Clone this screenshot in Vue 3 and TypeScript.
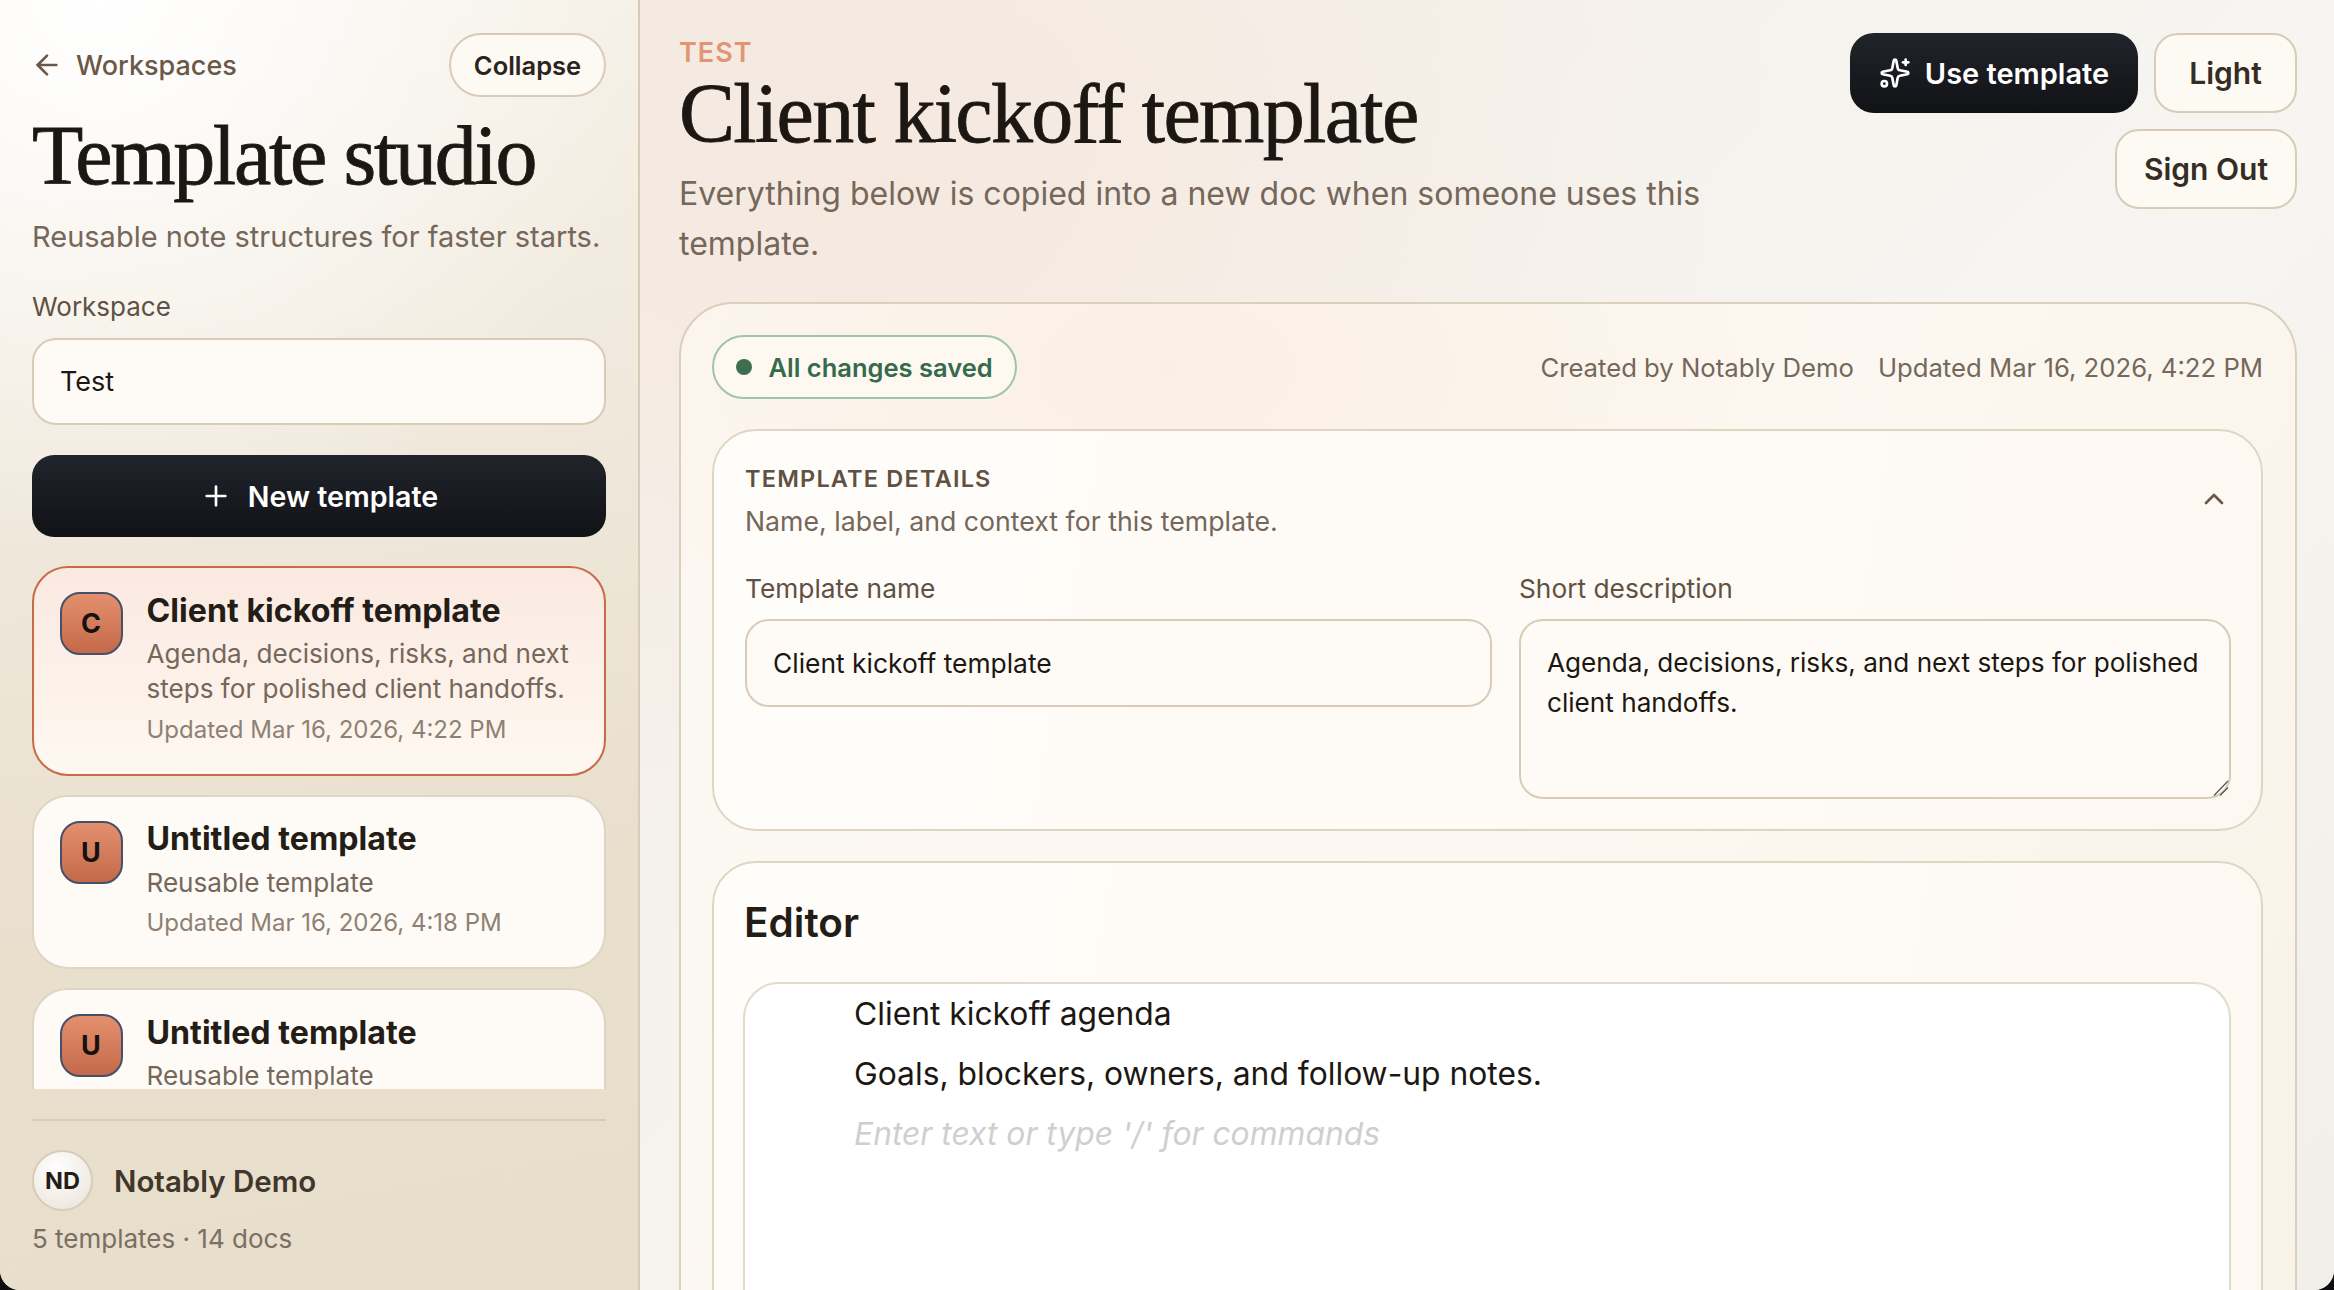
<template>
  <div class="app-shell">
    <aside class="sidebar">
      <div class="side-top">
        <a class="back-link">
          <svg class="back-icon" viewBox="0 0 24 24" fill="none" stroke="currentColor" stroke-width="2" stroke-linecap="round" stroke-linejoin="round">
            <path d="M19 12H5" /><path d="m12 19-7-7 7-7" />
          </svg>
          Workspaces
        </a>
        <button class="collapse-btn">Collapse</button>
      </div>
      <h1 class="side-title">Template studio</h1>
      <p class="side-sub">Reusable note structures for faster starts.</p>
      <label class="field-label side-label">Workspace</label>
      <div class="workspace-select">Test</div>
      <button class="new-btn">
        <svg class="plus-icon" viewBox="0 0 24 24" fill="none" stroke="currentColor" stroke-width="2" stroke-linecap="round">
          <path d="M5 12h14" /><path d="M12 5v14" />
        </svg>
        New template
      </button>
      <div class="template-list">
        <div v-for="t in templates" :key="t.id" class="template-card" :class="{ active: t.active }">
          <span class="tile">{{ t.title[0] }}</span>
          <div class="card-body">
            <div class="card-title">{{ t.title }}</div>
            <div class="card-desc">{{ t.desc }}</div>
            <div class="card-time">{{ t.updated }}</div>
          </div>
        </div>
      </div>
      <div class="side-foot">
        <div class="user-row">
          <span class="avatar">ND</span>
          <span class="user-name">Notably Demo</span>
        </div>
        <div class="counts">5 templates · 14 docs</div>
      </div>
    </aside>

    <main class="main">
      <header class="main-head">
        <div class="head-text">
          <div class="eyebrow">TEST</div>
          <h2 class="main-title">Client kickoff template</h2>
          <p class="main-sub">Everything below is copied into a new doc when someone uses this template.</p>
        </div>
        <div class="head-actions">
          <button class="use-btn">
            <svg class="spark-icon" viewBox="0 0 24 24" fill="none" stroke="currentColor" stroke-width="2" stroke-linecap="round" stroke-linejoin="round">
              <path d="M11.017 2.814a1 1 0 0 1 1.966 0l1.051 5.558a2 2 0 0 0 1.594 1.594l5.558 1.051a1 1 0 0 1 0 1.966l-5.558 1.051a2 2 0 0 0-1.594 1.594l-1.051 5.558a1 1 0 0 1-1.966 0l-1.051-5.558a2 2 0 0 0-1.594-1.594l-5.558-1.051a1 1 0 0 1 0-1.966l5.558-1.051a2 2 0 0 0 1.594-1.594z" />
              <path d="M20 2v4" /><path d="M22 4h-4" /><circle cx="4" cy="20" r="2" />
            </svg>
            Use template
          </button>
          <button class="ghost-btn light-btn">Light</button>
          <button class="ghost-btn signout-btn">Sign Out</button>
        </div>
      </header>

      <section class="panel">
        <div class="panel-top">
          <span class="saved-pill"><i class="dot"></i>All changes saved</span>
          <div class="meta">
            <span>Created by Notably Demo</span>
            <span>Updated Mar 16, 2026, 4:22 PM</span>
          </div>
        </div>

        <div class="details-card">
          <div class="details-head">
            <div>
              <div class="details-title">TEMPLATE DETAILS</div>
              <div class="details-sub">Name, label, and context for this template.</div>
            </div>
            <svg class="chevron" viewBox="0 0 24 24" fill="none" stroke="currentColor" stroke-width="2" stroke-linecap="round" stroke-linejoin="round">
              <path d="m18 15-6-6-6 6" />
            </svg>
          </div>
          <div class="details-grid">
            <div>
              <label class="field-label wide-label">Template name</label>
              <div class="text-input">Client kickoff template</div>
            </div>
            <div class="area-wrap">
              <label class="field-label wide-label">Short description</label>
              <textarea class="text-area" readonly :value="description"></textarea>
              <svg class="grip" viewBox="0 0 16 16" fill="none" stroke="#5a5148" stroke-width="1.2">
                <path d="M1 15.500 15 1" /><path d="M7 15.500 15 7.500" />
              </svg>
            </div>
          </div>
        </div>

        <div class="editor-card">
          <h3 class="editor-title">Editor</h3>
          <div class="editor-box">
            <p>Client kickoff agenda</p>
            <p>Goals, blockers, owners, and follow-up notes.</p>
            <p class="placeholder">Enter text or type '/' for commands</p>
          </div>
        </div>
      </section>
    </main>
  </div>
</template>

<script setup lang="ts">
interface TemplateItem {
  id: number
  title: string
  desc: string
  updated: string
  active?: boolean
}

const description = 'Agenda, decisions, risks, and next steps for polished client handoffs.'

const templates: TemplateItem[] = [
  { id: 1, title: 'Client kickoff template', desc: description, updated: 'Updated Mar 16, 2026, 4:22 PM', active: true },
  { id: 2, title: 'Untitled template', desc: 'Reusable template', updated: 'Updated Mar 16, 2026, 4:18 PM' },
  { id: 3, title: 'Untitled template', desc: 'Reusable template', updated: 'Updated Mar 16, 2026, 4:18 PM' }
]
</script>

<style>
html, body {
  margin: 0;
  height: 100%;
  overflow: hidden;
  background: #0e0e10;
}
</style>

<style scoped>
.app-shell {
  display: flex;
  width: 2334px;
  height: 1290px;
  overflow: hidden;
  font-family: Inter, "Liberation Sans", sans-serif;
  color: #1c1712;
  border-radius: 0 0 20px 20px;
  background: #f6f4ef;
}
button {
  font-family: inherit;
  cursor: pointer;
}
.sidebar {
  width: 640px;
  flex: none;
  box-sizing: border-box;
  height: 1290px;
  padding: 33px 32px 0;
  display: flex;
  flex-direction: column;
  border-right: 2px solid #d8ccb8;
  background:
    radial-gradient(circle at 16% 0%, #ffffff 0, rgba(255,255,255,0) 40%),
    linear-gradient(170deg, #f7f3ea 0%, #efe7da 40%, #e8dfcd 70%, #e7decc 100%);
}
.side-top {
  display: flex;
  justify-content: space-between;
  align-items: center;
  height: 64px;
}
.back-link {
  display: flex;
  align-items: center;
  gap: 13px;
  margin-left: -1px;
  font-size: 27px;
  font-weight: 500;
  color: #6a5848;
}
.back-icon {
  width: 32px;
  height: 32px;
}
.collapse-btn {
  height: 64px;
  width: 157px;
  border: 2px solid #d8ccb8;
  border-radius: 32px;
  background: #fdf9f3;
  font-size: 25.5px;
  font-weight: 600;
  color: #2b231c;
  padding: 0;
}
.side-title {
  margin: 13px 0 0;
  font-family: "Liberation Serif", serif;
  font-weight: 400;
  font-size: 84px;
  line-height: 92px;
  letter-spacing: -2.3px;
  -webkit-text-stroke: 0.8px #1c1712;
  color: #1c1712;
}
.side-sub {
  margin: 15px 0 0;
  font-size: 29px;
  line-height: 40px;
  color: #75675a;
}
.field-label {
  display: block;
  font-size: 26px;
  line-height: 36px;
  color: #5f5143;
}
.wide-label {
  font-size: 26.3px;
}
.side-label {
  margin-top: 32px;
}
.workspace-select {
  margin-top: 13px;
  height: 87px;
  box-sizing: border-box;
  border: 2px solid #d8ccb8;
  border-radius: 24px;
  background: #fefbf6;
  padding: 0 26px;
  display: flex;
  align-items: center;
  font-size: 27px;
}
.new-btn {
  margin-top: 30px;
  height: 82px;
  flex: none;
  border: none;
  border-radius: 22px;
  background: linear-gradient(180deg, #21242c, #111216);
  color: #fff;
  font-size: 28.6px;
  font-weight: 600;
  display: flex;
  align-items: center;
  justify-content: center;
  gap: 16px;
}
.plus-icon {
  width: 32px;
  height: 32px;
}
.template-list {
  margin-top: 29px;
  height: 523px;
  flex: none;
  overflow: hidden;
  display: flex;
  flex-direction: column;
  gap: 19px;
}
.template-card {
  flex: none;
  box-sizing: border-box;
  display: flex;
  gap: 24px;
  padding: 21.5px 26px 27px 25.5px;
  border: 2px solid #dfd5c5;
  border-radius: 36px;
  background: #fefbf6;
}
.template-card.active {
  border: 2px solid #c96a48;
  background: linear-gradient(180deg, #fae9e0, #fef8f1);
}
.tile {
  flex: none;
  width: 63px;
  height: 63px;
  margin-top: 2.5px;
  box-sizing: border-box;
  border: 2px solid #47506a;
  border-radius: 20px;
  background: linear-gradient(180deg, #e3906e, #c4694a);
  display: flex;
  align-items: center;
  justify-content: center;
  font-size: 27px;
  font-weight: 700;
  color: #14110e;
}
.card-body {
  min-width: 0;
}
.card-title {
  font-size: 32.2px;
  line-height: 42px;
  font-weight: 700;
  color: #241d17;
}
.card-desc {
  margin-top: 4.5px;
  font-size: 26.1px;
  line-height: 35px;
  color: #75675a;
}
.card-time {
  margin-top: 6.5px;
  font-size: 24px;
  line-height: 34px;
  color: #8e8174;
}
.side-foot {
  margin-top: 30px;
  border-top: 2px solid #d8ccb8;
  padding-top: 29px;
}
.user-row {
  display: flex;
  align-items: center;
  gap: 21px;
}
.avatar {
  width: 61px;
  height: 61px;
  box-sizing: border-box;
  border-radius: 50%;
  border: 2px solid #d8ccb8;
  background: radial-gradient(circle at 40% 30%, #fff, #e9e2d6);
  display: flex;
  align-items: center;
  justify-content: center;
  font-size: 23.5px;
  font-weight: 700;
  color: #241d17;
}
.user-name {
  font-size: 29.5px;
  font-weight: 600;
  color: #40362b;
}
.counts {
  margin-top: 10px;
  font-size: 26px;
  line-height: 36px;
  color: #7b6e62;
}
.main {
  flex: 1;
  min-width: 0;
  box-sizing: border-box;
  padding: 36px 37px 0 39px;
  background:
    radial-gradient(ellipse 900px 700px at 15% 15%, rgba(244,216,200,0.32), rgba(244,216,200,0) 100%),
    linear-gradient(135deg, #f5efe8 0%, #f6f5f1 60%, #f2efe9 100%);
}
.main-head {
  display: flex;
  justify-content: space-between;
  align-items: flex-start;
  gap: 40px;
  height: 266px;
}
.head-text {
  width: 1060px;
  padding-top: 2px;
}
.eyebrow {
  font-size: 27px;
  line-height: 30px;
  font-weight: 600;
  letter-spacing: 1px;
  color: #e29574;
}
.main-title {
  margin: 0;
  font-family: "Liberation Serif", serif;
  font-weight: 400;
  font-size: 84px;
  line-height: 92px;
  letter-spacing: -1.7px;
  -webkit-text-stroke: 0.8px #1c1712;
  color: #1c1712;
}
.main-sub {
  margin: 8.5px 0 0;
  font-size: 32px;
  line-height: 50px;
  color: #75675a;
}
.head-actions {
  width: 450px;
  margin-top: -3px;
  display: flex;
  flex-wrap: wrap;
  justify-content: flex-end;
  gap: 16px;
}
.use-btn {
  height: 80px;
  width: 288px;
  border: none;
  border-radius: 24px;
  background: linear-gradient(180deg, #21242a, #111216);
  color: #fff;
  font-size: 29px;
  font-weight: 600;
  display: flex;
  align-items: center;
  justify-content: center;
  gap: 14px;
  padding: 0;
}
.spark-icon {
  width: 32px;
  height: 32px;
}
.ghost-btn {
  height: 80px;
  padding: 0;
  border: 2px solid #d8ccb8;
  border-radius: 24px;
  background: #fdf9f3;
  font-size: 30px;
  font-weight: 600;
  color: #352c23;
}
.light-btn {
  width: 143px;
}
.signout-btn {
  width: 182px;
}
.panel {
  box-sizing: border-box;
  border: 2px solid #dbcfbd;
  border-radius: 54px;
  padding: 31px 32px 32px 31px;
  background:
    radial-gradient(ellipse 700px 400px at 30% 5%, rgba(250,232,218,0.55), rgba(250,232,218,0) 100%),
    linear-gradient(120deg, #fcf8f2, #fcf8f1 50%, #f8f2e7);
}
.panel-top {
  display: flex;
  justify-content: space-between;
  align-items: center;
}
.saved-pill {
  height: 64px;
  box-sizing: border-box;
  display: inline-flex;
  align-items: center;
  gap: 16.5px;
  padding: 0 22px;
  border: 2px solid #a0c4a8;
  border-radius: 32px;
  background: #fdf8f0;
  color: #356b4c;
  font-size: 25.5px;
  font-weight: 600;
}
.dot {
  width: 16px;
  height: 16px;
  border-radius: 50%;
  background: #3e6e50;
}
.meta {
  display: flex;
  gap: 24px;
  font-size: 25.7px;
  color: #75675a;
}
.details-card {
  margin-top: 30px;
  box-sizing: border-box;
  height: 402px;
  border: 2px solid #dfd5c3;
  border-radius: 44px;
  padding: 32.5px 31px 0;
  background: linear-gradient(100deg, #fffdfa, #fdf8f1);
}
.details-head {
  display: flex;
  justify-content: space-between;
  align-items: center;
}
.details-title {
  font-size: 23.5px;
  line-height: 30px;
  font-weight: 600;
  letter-spacing: 1.2px;
  color: #5f5143;
}
.details-sub {
  margin-top: 10px;
  font-size: 26.7px;
  line-height: 34px;
  color: #75675a;
}
.chevron {
  width: 32px;
  height: 32px;
  margin-top: -3px;
  color: #6a5848;
  margin-right: 0;
}
.details-grid {
  margin-top: 33px;
  display: grid;
  grid-template-columns: 747px 712px;
  gap: 27px;
}
.text-input {
  margin-top: 12px;
  height: 88px;
  box-sizing: border-box;
  border: 2px solid #d8ccb8;
  border-radius: 24px;
  padding: 0 26px;
  display: flex;
  align-items: center;
  font-size: 26.4px;
  background: #fefbf6;
}
.area-wrap {
  position: relative;
}
.text-area {
  display: block;
  margin-top: 12px;
  width: 100%;
  height: 180px;
  box-sizing: border-box;
  border: 2px solid #d8ccb8;
  border-radius: 24px;
  padding: 22px 26px;
  font-family: inherit;
  font-size: 26.15px;
  line-height: 40px;
  color: #1c1712;
  background: #fefbf6;
  outline: none;
  resize: none;
}
.grip {
  position: absolute;
  right: 2px;
  bottom: 3px;
  width: 16px;
  height: 16px;
}
.editor-card {
  margin-top: 30px;
  box-sizing: border-box;
  border: 2px solid #dfd5c3;
  border-radius: 44px;
  height: 700px;
  padding: 30px 30px 30px 29px;
  background: linear-gradient(100deg, #fffdfa, #fdf8f1);
}
.editor-title {
  margin: 0 0 0 1px;
  font-size: 40.5px;
  line-height: 60px;
  font-weight: 600;
  color: #241d17;
}
.editor-box {
  margin-top: 29px;
  height: 600px;
  box-sizing: border-box;
  border: 2px solid #e2dacb;
  border-radius: 36px;
  background: #fff;
  padding: 8px 108px 8px 109px;
  font-size: 31.8px;
  line-height: 44px;
  color: #1c1712;
}
.editor-box p {
  margin: 0 0 16px;
}
.placeholder {
  font-style: italic;
  color: #cfcfcf;
}
</style>
